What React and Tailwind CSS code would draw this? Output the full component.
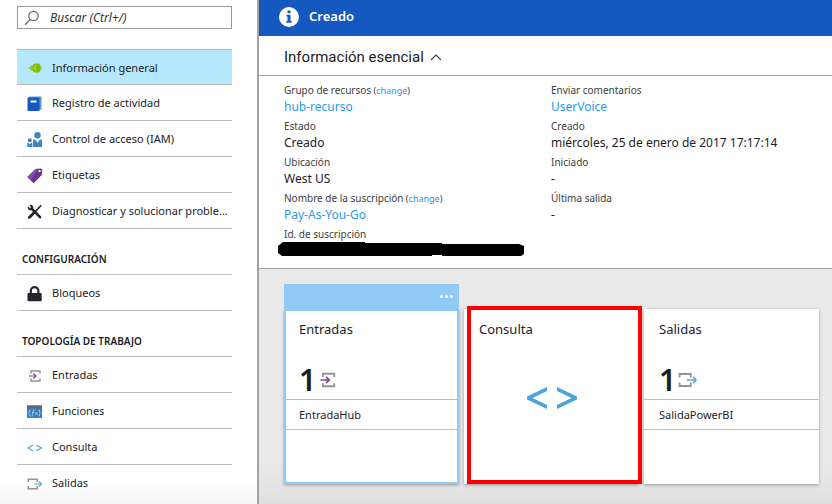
import React from "react";

const svgBase = { fill: "none", "aria-hidden": true };

const SearchIcon = () => (
  <svg {...svgBase} className="h-4 w-4 shrink-0" viewBox="0 0 16 16">
    <circle cx="9.5" cy="6" r="4.7" stroke="#666" strokeWidth="1.2" />
    <path d="M6.2 9.4 1 14.8" stroke="#666" strokeWidth="1.3" />
  </svg>
);

const GearIcon = () => (
  <svg {...svgBase} className="h-4 w-4" viewBox="0 0 16 16">
    <circle cx="9.5" cy="8" r="4.3" stroke="#7fba00" strokeWidth="1.6" strokeDasharray="1.6 1.1" />
    <circle cx="9.5" cy="8" r="3.9" fill="#7fba00" />
    <path d="M1.5 8.200h4M3.500 6.400h3M3.500 10h3" stroke="#7fba00" strokeWidth="1.2" />
    <path d="M6 8.200h3M7.500 6.400h2.200M7.500 10h2.200" stroke="#b8dc5a" strokeWidth="1" />
  </svg>
);

const BookIcon = () => (
  <svg {...svgBase} className="h-4 w-4" viewBox="0 0 16 16">
    <path d="M2 .5h12.500v13.200H2z" fill="#5b9bd5" />
    <path d="M.5 1.500h12V15H.5z" fill="#1458c0" />
    <path d="M3.500 4.500h6v2h-6z" fill="#fff" />
  </svg>
);

const PeopleIcon = () => (
  <svg {...svgBase} className="h-4 w-4" viewBox="0 0 16 16">
    <g fill="#3a87c4">
      <circle cx="10.500" cy="3.200" r="3.200" />
      <path d="M6 7.500h2.200l2.300 3.200 2.500-3.200h2V15H6z" />
      <circle cx="2.800" cy="8.300" r="2" />
      <path d="M.3 10.800h1.200l1.300 1.700 1.300-1.700h1.200V15h-5z" />
    </g>
  </svg>
);

const TagIcon = () => (
  <svg {...svgBase} className="h-4 w-4" viewBox="0 0 16 16">
    <path d="M8.500 1 14 .5l1.200 1.100-.4 5.400-8.200 8.300L.3 9z" fill="#68348c" />
    <path d="M8.500 1 11 .8 3.800 12.500.3 9z" fill="#804fa3" />
    <circle cx="12.600" cy="3.200" r="1.100" fill="#fff" />
  </svg>
);

const ToolsIcon = () => (
  <svg {...svgBase} className="h-4 w-4" viewBox="0 0 16 16">
    <path d="M4.500 4.500 13 13.200" stroke="#23262f" strokeWidth="2.600" strokeLinecap="round" />
    <path d="M.8 2.200 3 4.400 4.400 3.300 2.400.9C4.500.3 6.700 1.700 6.400 4L4 6.400C1.800 6.700.2 4.500.8 2.200z" fill="#23262f" />
    <path d="M14.300 1.300 8.500 7.400" stroke="#23262f" strokeWidth="1.600" />
    <path d="M7 8.800 2.300 13.500" stroke="#23262f" strokeWidth="2.800" strokeLinecap="round" />
  </svg>
);

const LockIcon = () => (
  <svg {...svgBase} className="h-4 w-4" viewBox="0 0 16 16">
    <path d="M3.800 7.500V5a3.800 3.800 0 0 1 7.600 0v2.500" stroke="#23262f" strokeWidth="2.200" />
    <rect x=".5" y="7" width="14.200" height="8.300" rx="1" fill="#23262f" />
  </svg>
);

const InputIcon = ({ className = "h-4 w-4" }) => (
  <svg {...svgBase} className={className} viewBox="0 0 16 16">
    <path d="M4 5.500V3h9v2.500M4 10.500V13h9v-2.500" stroke="#949494" strokeWidth="1.500" />
    <path d="M2 8h7M6.500 5.500 9 8l-2.500 2.500" stroke="#7d4199" strokeWidth="1.200" />
  </svg>
);

const OutputIcon = ({ className = "h-4 w-4" }) => (
  <svg {...svgBase} className={className} viewBox="0 0 16 16">
    <path d="M1.200 6V3.200h9V6M1.200 10v2.800h9V10" stroke="#949494" strokeWidth="1.500" />
    <path d="M7 8h7.500M12 5.500 14.500 8 12 10.500" stroke="#59aadb" strokeWidth="1.200" />
  </svg>
);

const FunctionIcon = () => (
  <svg {...svgBase} className="h-4 w-4" viewBox="0 0 16 16">
    <path d="M0 1.500h15V14H0z" fill="#3680bd" />
    <path d="M0 1.500h15v3H0z" fill="#5f6670" />
    <path d="M3.500 6h-1v2l-.8 1 .8 1v2h1M11.500 6h1v2l.8 1-.8 1v2h-1M7.500 6H6.300L5 12.500M5.200 8.500h2M8 8l2.500 3M10.500 8 8 11" stroke="#a9d6f5" strokeWidth=".8" />
  </svg>
);

const CodeIcon = () => (
  <svg {...svgBase} className="h-4 w-4" viewBox="0 0 16 16">
    <path d="M6 5 1.200 8 6 11M9.500 5l4.800 3-4.800 3" stroke="#59aadb" strokeWidth="1.400" />
  </svg>
);

const general = [
  { label: "Información general", Icon: GearIcon, active: true },
  { label: "Registro de actividad", Icon: BookIcon },
  { label: "Control de acceso (IAM)", Icon: PeopleIcon },
  { label: "Etiquetas", Icon: TagIcon },
  { label: "Diagnosticar y solucionar proble...", Icon: ToolsIcon },
];
const topology = [
  { label: "Entradas", Icon: InputIcon },
  { label: "Funciones", Icon: FunctionIcon },
  { label: "Consulta", Icon: CodeIcon },
  { label: "Salidas", Icon: OutputIcon },
];

function NavList({ items, open }) {
  return (
    <ul className="border-t border-[#bdbdbd]">
      {items.map(({ label, Icon, active }) => (
        <li key={label} className={`border-b border-[#bdbdbd] ${open ? "last:border-b-0" : ""}`}>
          <a
            href="#"
            aria-current={active ? "page" : undefined}
            className={`flex items-center gap-[9px] pt-[2px] pl-[10px] ${active ? "h-[34px] bg-[#b5e8fc]" : "h-[35px]"}`}
          >
            <span className="shrink-0"><Icon /></span>
            <span className="whitespace-nowrap">{label}</span>
          </a>
        </li>
      ))}
    </ul>
  );
}

function Field({ label, change, href, children }) {
  return (
    <div className="h-9">
      <dt className="h-4 text-[10px] leading-4 whitespace-nowrap text-[#3c3c3c]">
        {label}
        {change && (
          <span className="text-[9px]"> (<a href="#" className="text-[#2899f0]">change</a>)</span>
        )}
      </dt>
      <dd className="text-[12px] leading-[18px] whitespace-nowrap">
        {href ? <a href="#" className="text-[#2899f0]">{children}</a> : children}
      </dd>
    </div>
  );
}

function CountTile({ title, icon, item, selected }) {
  return (
    <section className={`flex h-[175px] flex-col bg-white shadow-[0_1px_3px_rgba(0,0,0,0.35)] ${selected ? "border-2 border-[#90caf5]" : ""}`}>
      <div className={`flex flex-col justify-between pb-[3px] ${selected ? "h-[88px] pt-2 pl-[13px]" : "h-[90px] pt-[10px] pl-[15px]"}`}>
        <h3 className="text-[13px] leading-5">{title}</h3>
        <div className="flex items-center gap-[2px]">
          <span className="text-[30px] leading-8 font-semibold">1</span>
          {icon}
        </div>
      </div>
      <div className={`flex h-[31px] items-center border-y border-[#bdbdbd] pt-px text-[11px] ${selected ? "pl-[13px]" : "pl-[15px]"}`}>{item}</div>
    </section>
  );
}

export default function App() {
  return (
    <div className="flex h-screen overflow-hidden bg-white font-['Noto_Sans','Open_Sans',sans-serif] text-[11px] text-[#1c1c24]">
      <aside className="w-[259px] shrink-0 overflow-hidden border-r-2 border-[#a3a3a3] bg-linear-to-b from-white from-95% to-[#f5f5f5] pt-[6px] pr-[25px] pl-[17px]">
        <label className="flex h-[23px] items-center gap-2 border border-[#999] pl-[6px]">
          <SearchIcon />
          <input
            type="search"
            aria-label="Buscar"
            placeholder="Buscar (Ctrl+/)"
            className="w-full min-w-0 bg-transparent pl-[2px] text-[12px] italic outline-none placeholder:text-[#333]"
          />
        </label>
        <nav className="pt-5">
          <NavList items={general} />
          <h2 className="flex h-[45px] items-end pb-[7px] pl-[5px] text-[10px] font-semibold">CONFIGURACIÓN</h2>
          <NavList items={[{ label: "Bloqueos", Icon: LockIcon }]} />
          <h2 className="flex h-[45px] items-end pb-[7px] pl-[5px] text-[10px] font-semibold">TOPOLOGÍA DE TRABAJO</h2>
          <NavList items={topology} open />
        </nav>
      </aside>

      <main className="flex min-w-0 flex-1 flex-col overflow-hidden">
        <header className="flex h-9 shrink-0 items-center gap-[10px] bg-[#1458c0] pb-[3px] pl-5 text-[13px] font-semibold text-white">
          <svg {...svgBase} className="h-5 w-5" viewBox="0 0 20 20">
            <circle cx="10" cy="10" r="10" fill="#fff" />
            <path d="M8.500 3.500h3v2.700h-3zM7.500 7.700h4v6.300h1.200v1.700H7.300V14h1.200V9.400h-1z" fill="#1458c0" />
          </svg>
          Creado
        </header>

        <button type="button" aria-expanded="true" className="flex h-10 shrink-0 items-center gap-[6px] border-b border-[#a3a3a3] pt-1 pl-[25px] font-[Roboto,sans-serif] text-[15px]">
          Información esencial
          <svg {...svgBase} className="h-3 w-3" viewBox="0 0 12 12">
            <path d="M1 8 6 3l5 5" stroke="#444" strokeWidth="1.200" />
          </svg>
        </button>

        <dl className="grid h-[193px] shrink-0 grid-cols-[267px_1fr] border-b border-[#a3a3a3] pt-[6px] pl-[25px]">
          <div>
            <Field label="Grupo de recursos" change href>hub-recurso</Field>
            <Field label="Estado">Creado</Field>
            <Field label="Ubicación">West US</Field>
            <Field label="Nombre de la suscripción" change href>Pay-As-You-Go</Field>
            <Field label="Id. de suscripción">
              <svg {...svgBase} className="-ml-[6px] block h-4 w-[248px]" viewBox="0 0 248 16">
                <path d="M5 0h82v1h77v1h77l5 2v8l-3 2h-79v-1h-10v1H4l-4-3V4z" fill="#000" />
              </svg>
            </Field>
          </div>
          <div>
            <Field label="Enviar comentarios" href>UserVoice</Field>
            <Field label="Creado">miércoles, 25 de enero de 2017 17:17:14</Field>
            <Field label="Iniciado">-</Field>
            <Field label="Última salida">-</Field>
          </div>
        </dl>

        <div className="min-h-0 flex-1 overflow-hidden bg-linear-to-b from-[#e9e9e9] from-85% to-[#dfdfdf] pt-[15px] pr-[13px] pl-[25px]">
          <div className="grid grid-cols-3 items-end gap-[5px]">
            <div>
              <div className="relative flex h-[25px] items-center justify-end bg-[#90caf5] pr-[6px]">
                <button type="button" aria-label="Más opciones" className="flex gap-[2px]">
                  <span className="h-[3px] w-[3px] rounded-full bg-white" />
                  <span className="h-[3px] w-[3px] rounded-full bg-white" />
                  <span className="h-[3px] w-[3px] rounded-full bg-white" />
                </button>
              </div>
              <CountTile selected title="Entradas" item="EntradaHub" icon={<InputIcon className="h-5 w-5" />} />
            </div>
            <section className="relative h-[175px] bg-white pt-[10px] pl-[15px] shadow-[0_1px_3px_rgba(0,0,0,0.35)]">
              <h3 className="text-[13px] leading-5">Consulta</h3>
              <div className="flex justify-center pt-12 pr-[14px]">
                <svg {...svgBase} className="h-[22px] w-[50px]" viewBox="0 0 50 22">
                  <path d="M20 0v4L5.500 11 20 18v4L0 12.500v-3zM30 0v4l14.500 7L30 18v4l20-9.500v-3z" fill="#4da3db" />
                </svg>
              </div>
              <div className="pointer-events-none absolute -top-[3px] -right-[3px] bottom-0 left-[3px] border-4 border-[#ff0000]" />
            </section>
            <CountTile title="Salidas" item="SalidaPowerBI" icon={<OutputIcon className="h-5 w-5" />} />
          </div>
          <h2 className="pt-[15px] text-[13px] leading-5">Supervisión</h2>
        </div>
      </main>
    </div>
  );
}
